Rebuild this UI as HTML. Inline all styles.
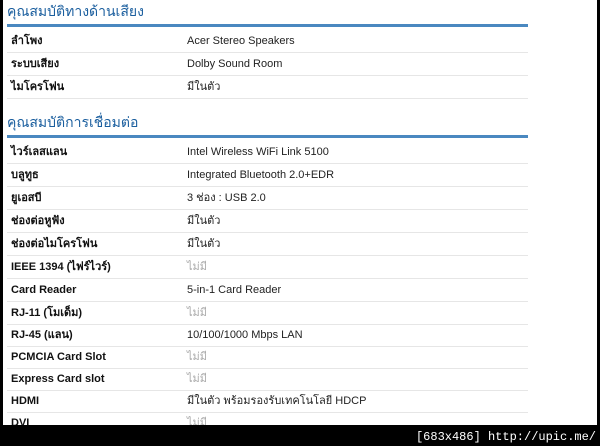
<!DOCTYPE html>
<html><head><meta charset="utf-8"><style>
body{margin:0;width:600px;height:446px;background:#000;position:relative;overflow:hidden;font-family:Tahoma,"Liberation Sans","Noto Sans CJK SC",sans-serif;}
#pg{position:absolute;left:3px;top:0;width:594px;height:425px;background:#fff;overflow:hidden}
.h{position:absolute;left:4px;font-size:14px;color:#1a5e9e}
.ln{position:absolute;left:4px;width:521px;height:3px;background:#4a88c0}
.r{position:absolute;left:4px;width:521px;height:22px;border-bottom:1px solid #e6e6e6;font-size:11px;color:#222;line-height:22px}
.r b{position:absolute;left:4px;font-weight:bold;color:#111}
.r span{position:absolute;left:180px}
.g{color:#aaa}
#ft{position:absolute;right:4px;bottom:2px;color:#fff;font-family:"Liberation Mono",monospace;font-size:12px}
</style></head><body>
<div id="pg">
<div class="h" style="top:1px">คุณสมบัติทางด้านเสียง</div>
<div class="ln" style="top:24px"></div>
<div class="r" style="top:30px"><b>ลำโพง</b><span>Acer Stereo Speakers</span></div>
<div class="r" style="top:53px"><b>ระบบเสียง</b><span>Dolby Sound Room</span></div>
<div class="r" style="top:76px"><b>ไมโครโฟน</b><span>มีในตัว</span></div>
<div class="h" style="top:112px">คุณสมบัติการเชื่อมต่อ</div>
<div class="ln" style="top:135px"></div>
<div class="r" style="top:141px"><b>ไวร์เลสแลน</b><span>Intel Wireless WiFi Link 5100</span></div>
<div class="r" style="top:164px"><b>บลูทูธ</b><span>Integrated Bluetooth 2.0+EDR</span></div>
<div class="r" style="top:187px"><b>ยูเอสบี</b><span>3 ช่อง : USB 2.0</span></div>
<div class="r" style="top:210px"><b>ช่องต่อหูฟัง</b><span>มีในตัว</span></div>
<div class="r" style="top:233px"><b>ช่องต่อไมโครโฟน</b><span>มีในตัว</span></div>
<div class="r" style="top:256px"><b>IEEE 1394 (ไฟร์ไวร์)</b><span class="g">ไม่มี</span></div>
<div class="r" style="top:279px"><b>Card Reader</b><span>5-in-1 Card Reader</span></div>
<div class="r" style="top:302px"><b>RJ-11 (โมเด็ม)</b><span class="g">ไม่มี</span></div>
<div class="r" style="top:324px"><b>RJ-45 (แลน)</b><span>10/100/1000 Mbps LAN</span></div>
<div class="r" style="top:346px"><b>PCMCIA Card Slot</b><span class="g">ไม่มี</span></div>
<div class="r" style="top:368px"><b>Express Card slot</b><span class="g">ไม่มี</span></div>
<div class="r" style="top:390px"><b>HDMI</b><span>มีในตัว พร้อมรองรับเทคโนโลยี HDCP</span></div>
<div class="r" style="top:412px"><b>DVI</b><span class="g">ไม่มี</span></div>
</div>
<div id="ft">[683x486] http://upic.me/</div>
</body></html>
